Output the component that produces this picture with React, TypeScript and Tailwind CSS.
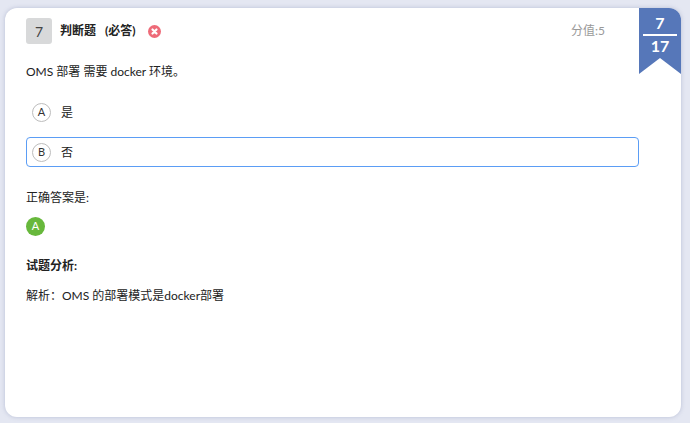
const font = "[font-family:'Lato','Noto_Sans_CJK_SC',sans-serif]";

function Letter({ children }: { children: string }) {
  return (
    <span className="flex h-[19px] w-[19px] shrink-0 items-center justify-center rounded-full border border-[#bdbdbd] bg-white text-[11px] text-[#333]">
      {children}
    </span>
  );
}

function Ribbon() {
  return (
    <div className="absolute right-0 top-0 w-[42px] h-[66px] overflow-hidden rounded-tr-xl">
      <svg className="absolute inset-0" width="42" height="66" viewBox="0 0 42 66">
        <path d="M0 0H42V66L21 50L0 66Z" fill="#5677b9" />
      </svg>
      <div className="relative flex flex-col items-center pt-[5px] text-[16px] font-bold leading-[20px] text-white">
        <span>7</span>
        <span className="mt-[1px] h-[2px] w-[34px] bg-white" />
        <span>17</span>
      </div>
    </div>
  );
}

export default function App() {
  return (
    <div className={`${font} h-[423px] w-[690px] overflow-hidden bg-[#e4e7f2] pl-[5px] pr-[9px] pt-[8px] text-[12px] text-[#222]`}>
      <div className="relative h-[409px] rounded-xl bg-white pl-[21px] pt-[10px] shadow-[0_0_4px_rgba(120,130,170,0.4)]">
        <Ribbon />

        <div className="flex items-center">
          <span className="flex h-[26px] w-[26px] items-center justify-center rounded-[3px] bg-[#d8d9da] text-[14px] text-[#444]">7</span>
          <span className="ml-[8px] font-semibold text-[#222]">判断题</span>
          <span className="ml-[9px] font-bold text-[#222]">(必答)</span>
          <svg className="ml-[12px]" width="13" height="13" viewBox="0 0 13 13">
            <circle cx="6.5" cy="6.5" r="6.5" fill="#ee6a78" />
            <path d="M4.5 4.5L8.5 8.5M8.5 4.5L4.5 8.5" stroke="#fff" strokeWidth="2.2" strokeLinecap="round" />
          </svg>
          <span className="ml-auto mr-[76px] text-[#999]">分值:5</span>
        </div>

        <p className="mt-[19px] leading-[18px]">OMS 部署 需要 docker 环境。</p>

        <div className="mt-[16px] flex h-[30px] w-[613px] items-center gap-[10px] px-[6px]">
          <Letter>A</Letter>
          <span className="pt-[2px]">是</span>
        </div>
        <div className="mt-[10px] flex h-[30px] w-[613px] items-center gap-[10px] rounded-[4px] border border-[#5b9df5] px-[5px]">
          <Letter>B</Letter>
          <span className="pt-[2px]">否</span>
        </div>

        <p className="mt-[22px] leading-[18px]">正确答案是:</p>
        <span className="mt-[10px] flex h-[19px] w-[19px] items-center justify-center rounded-full bg-[#67b83c] text-[11px] text-white">A</span>

        <p className="mt-[21px] font-bold leading-[18px]">试题分析:</p>
        <p className="mt-[12px] leading-[18px]">解析：OMS 的部署模式是docker部署</p>
      </div>
    </div>
  );
}
